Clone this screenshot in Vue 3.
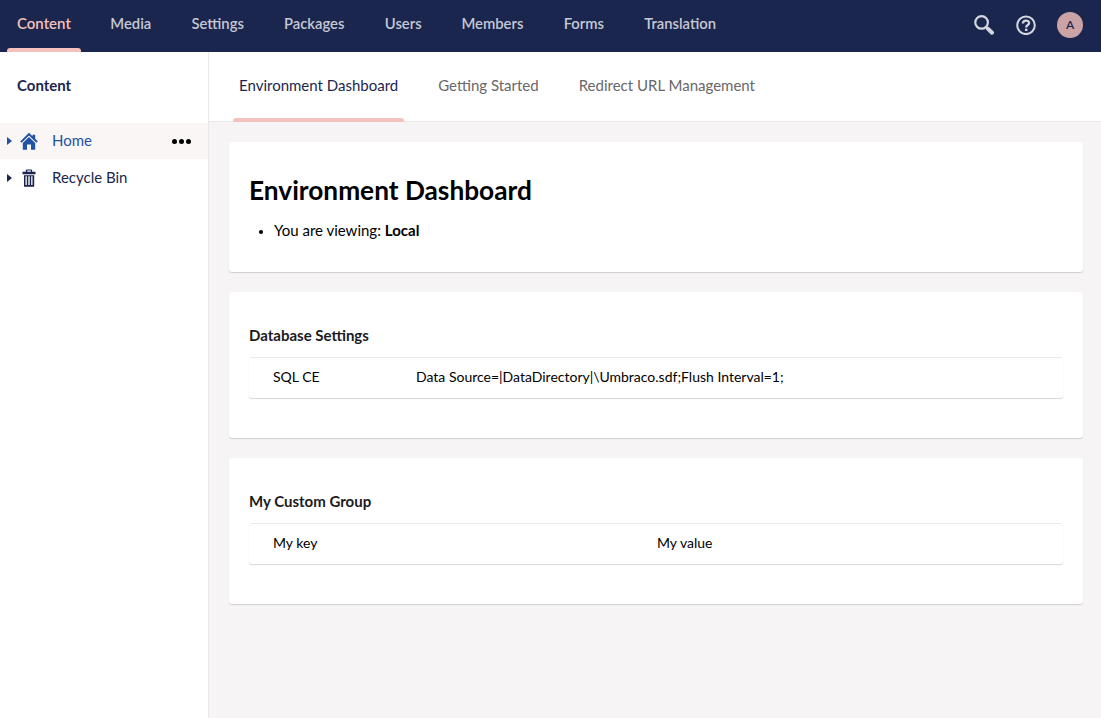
<script setup>
const nav = [
  { t: 'Content', w: 93.3 }, { t: 'Media', w: 81.2 }, { t: 'Settings', w: 92.5 }, { t: 'Packages', w: 100.8 },
  { t: 'Users', w: 76.7 }, { t: 'Members', w: 102.2 }, { t: 'Forms', w: 80.5 }, { t: 'Translation', w: 112 },
]
const tabs = ['Environment Dashboard', 'Getting Started', 'Redirect URL Management']
</script>

<template>
  <div class="app">
    <header class="top">
      <nav class="nav">
        <div v-for="(n, i) in nav" :key="n.t" class="slot" :style="{ width: n.w + 'px' }">
          <a :class="{ on: i === 0 }">{{ n.t }}</a>
        </div>
      </nav>
      <div class="tools">
        <svg class="search" width="20" height="20" viewBox="0 0 20 20" fill="none" stroke="#d5d7e0">
          <circle cx="7.6" cy="7.4" r="6.3" stroke-width="2.2" />
          <path d="M12.3 12.1L13.5 13.3" stroke-width="2.2" />
          <path d="M14.1 13.9L18 17.7" stroke-width="4" stroke-linecap="round" />
        </svg>
        <svg class="help" width="20" height="20" viewBox="0 0 20 20" fill="none" stroke="#d5d7e0" stroke-width="2">
          <circle cx="10" cy="10.3" r="8.8" />
          <path d="M6.9 8.6C6.9 4.6 13.1 4.7 13.1 8C13.1 10.1 10.2 9.9 10.2 12.5" stroke-width="2.3" />
          <path d="M10.2 13.7V16" stroke-width="2.5" />
        </svg>
        <span class="avatar">A</span>
      </div>
    </header>
    <div class="body">
      <aside class="side">
        <h5>Content</h5>
        <div class="row on">
          <i class="caret"></i>
          <svg width="18" height="18" viewBox="0 0 18 18" fill="#2152a3">
            <path d="M9 .8L12.5 4.2V2.8H15.2V6.8L17.8 9.4L16.4 10.8L9 3.5L1.6 10.8L.2 9.4Z" />
            <path d="M9 4.9L15.2 11V17.8H11V12.4H7V17.8H2.8V11Z" />
          </svg>
          <span>Home</span>
          <div class="dots"><i></i><i></i><i></i></div>
        </div>
        <div class="row">
          <i class="caret"></i>
          <svg width="18" height="18" viewBox="0 0 18 18" fill="#1b264f">
            <path fill-rule="evenodd" d="M5.8 2.8V1.8Q5.8 .5 7 .5H11Q12.2 .5 12.2 1.8V2.8H15.5V5.2H2.5V2.8ZM7.2 1.6V2.8H10.8V1.6Z" />
            <path fill-rule="evenodd" d="M4 6.2H14.2V17.8H4ZM5.5 7.2V16H6.8V7.2ZM8.3 7.2V16H9.7V7.2ZM11.2 7.2V16H12.5V7.2Z" />
          </svg>
          <span>Recycle Bin</span>
        </div>
      </aside>
      <main class="main">
        <div class="tabs">
          <a v-for="(t, i) in tabs" :key="t" :class="{ on: i === 0 }">{{ t }}</a>
        </div>
        <div class="content">
          <section class="card first">
            <h1>Environment Dashboard</h1>
            <ul><li>You are viewing: <b>Local</b></li></ul>
          </section>
          <section class="card">
            <h4>Database Settings</h4>
            <div class="table db"><span>SQL CE</span><span>Data Source=|DataDirectory|\Umbraco.sdf;Flush Interval=1;</span></div>
          </section>
          <section class="card">
            <h4>My Custom Group</h4>
            <div class="table custom"><span>My key</span><span>My value</span></div>
          </section>
        </div>
      </main>
    </div>
  </div>
</template>

<style>
body { margin: 0; overflow: hidden; }
</style>
<style scoped>
* { box-sizing: border-box; }
.app { width: 1101px; height: 718px; font-family: Lato, sans-serif; font-size: 15px; line-height: 20px; color: #000; display: flex; flex-direction: column; }
.top { height: 52px; flex: none; background: #1b264f; display: flex; justify-content: space-between; }
.nav { display: flex; padding-left: 7px; }
.slot { flex: none; display: flex; }
.nav a { height: 52px; padding: 13px 10px 0; color: #c6c9d3; font-size: 14.8px; font-weight: 600; position: relative; }
.nav a.on { color: #f5c1bc; font-size: 15px; }
.nav a.on::after, .tabs a.on::after { content: ''; position: absolute; left: 0; right: 0; bottom: 0; height: 4px; background: #f5c1bc; border-radius: 3px 3px 0 0; }
.tools { display: flex; align-items: center; padding: 0 18px 2px 0; }
.help { margin: 0 21px 0 22px; }
.avatar { width: 26px; height: 26px; border-radius: 50%; background: #cba3a6; color: #1b264f; font-size: 12px; font-weight: 600; line-height: 25px; text-align: center; }
.body { flex: 1; display: flex; min-height: 0; }
.side { width: 209px; border-right: 1px solid #e9e9eb; background: #fff; color: #1b264f; }
.side h5 { margin: 0; height: 71px; padding: 23px 17px 0; font-size: 15px; line-height: 20px; }
.row { height: 36px; margin-bottom: 1px; display: flex; align-items: center; padding-left: 7px; }
.row.on { background: #faf6f5; color: #2152a3; }
.row svg { margin: 0 14px 0 8px; }
.row span { padding-bottom: 2px; }
.caret { width: 5px; height: 0; border: solid transparent; border-width: 4px 0 4px 5px; border-left-color: currentColor; margin-bottom: 1px; }
.dots { margin-left: auto; margin-right: 17px; display: flex; gap: 2px; }
.dots i { width: 5px; height: 5px; border-radius: 50%; background: #000; }
.main { flex: 1; background: #f6f4f4; }
.tabs { height: 70px; background: #fff; border-bottom: 1px solid #e9e9eb; display: flex; padding-left: 24px; }
.tabs a { height: 70px; padding: 23px 6px 0; margin-right: 28px; color: #68676b; position: relative; }
.tabs a.on { color: #1b264f; }
.content { padding: 20px 18px 0 20px; }
.card { background: #fff; height: 146px; margin-bottom: 20px; padding: 33px 20px 0; border-radius: 3px; box-shadow: 0 1px 1px rgba(0,0,0,.16); }
.card.first { height: 130px; padding-top: 30px; }
h1 { margin: 0; font-size: 26.25px; line-height: 36px; font-weight: 700; }
ul { margin: 12px 0 0 25px; padding: 0; }
li::marker { font-size: 12px; }
h4 { margin: 0 0 12px; font-size: 15px; line-height: 20px; color: #1b1b1f; }
.table { height: 41px; border-top: 1px solid #e9e9eb; border-radius: 3px; box-shadow: 0 1px 1px rgba(0,0,0,.16); display: grid; padding: 0 24px; line-height: 38px; font-size: 14px; }
.db { grid-template-columns: 143px 1fr; }
.custom { grid-template-columns: 384px 1fr; }
</style>
